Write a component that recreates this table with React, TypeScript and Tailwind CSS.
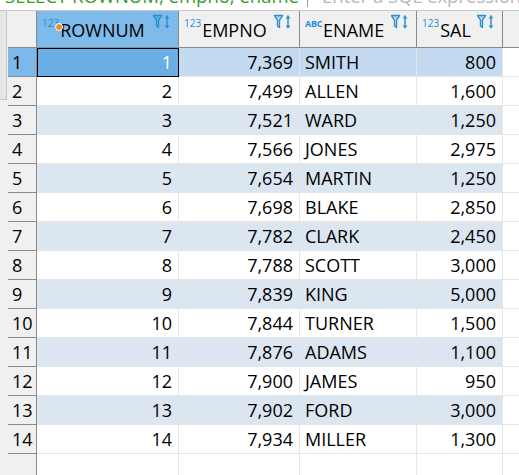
import React from "react";

const ROWS: [number, string, string, string][] = [
  [1, "7,369", "SMITH", "800"],
  [2, "7,499", "ALLEN", "1,600"],
  [3, "7,521", "WARD", "1,250"],
  [4, "7,566", "JONES", "2,975"],
  [5, "7,654", "MARTIN", "1,250"],
  [6, "7,698", "BLAKE", "2,850"],
  [7, "7,782", "CLARK", "2,450"],
  [8, "7,788", "SCOTT", "3,000"],
  [9, "7,839", "KING", "5,000"],
  [10, "7,844", "TURNER", "1,500"],
  [11, "7,876", "ADAMS", "1,100"],
  [12, "7,900", "JAMES", "950"],
  [13, "7,902", "FORD", "3,000"],
  [14, "7,934", "MILLER", "1,300"],
];

const COLS = "grid-cols-[29px_142px_121px_117px_86px_1fr]";

function FilterSort() {
  return (
    <svg width="20" height="16" viewBox="0 0 20 16" className="shrink-0">
      <path d="M1.5 1.5h8l-3 4.5v7.5l-2-1.5v-6z" fill="none" stroke="#2a8fd0" strokeWidth="1.4" strokeLinejoin="round" />
      <path d="M4.5 3h2" stroke="#2a8fd0" strokeWidth="1" />
      <path d="M15 1.5v12.5" stroke="#2a8fd0" strokeWidth="1.5" />
      <path d="M12.5 4.5l2.5-3 2.5 3z" fill="#2a8fd0" />
      <path d="M12.5 11.5l2.5 3 2.5-3z" fill="#2a8fd0" />
    </svg>
  );
}

function HeaderCell({ label, kind, active, dot }: { label: string; kind: string; active?: boolean; dot?: boolean }) {
  return (
    <div
      className={`relative flex items-end justify-between border-r border-b border-[#8a8a8a] pl-[5px] pr-[6px] pb-[8px] ${
        active ? "bg-[#7fbbea]" : "bg-[#f0f0f0]"
      }`}
    >
      <div className="flex items-end">
        <span
          className={`relative mb-[11px] mr-[1px] leading-none text-[#1b8fd8] ${
            kind === "ABC" ? "text-[9px] font-bold tracking-[-0.3px]" : "text-[10px]"
          }`}
        >
          {kind}
          {dot && (
            <span className="absolute right-[-4px] top-[5px] h-[8px] w-[8px] rounded-full border border-white bg-[#ef8a2a]" />
          )}
        </span>
        <span className="text-[18px] leading-none text-black">{label}</span>
      </div>
      <div className="mb-[9px]">
        <FilterSort />
      </div>
    </div>
  );
}

export default function App() {
  return (
    <div className="h-[475px] w-[519px] overflow-hidden bg-white font-['Open_Sans','Noto_Sans',sans-serif] text-black">
      <div className="relative h-[10px] overflow-hidden">
        <div className="absolute left-[5px] top-[-16px] flex items-center whitespace-nowrap text-[18.5px] leading-[24px]">
          <span className="text-[#3a9a2c]">SELECT ROWNUM, empno, ename</span>
          <span className="ml-[8px] mr-[14px] h-[22px] w-px bg-[#9a9a9a]" />
          <span className="text-[#b8b8b8]">Enter a SQL expression to filter results</span>
        </div>
      </div>
      <div className="flex h-[465px]">
        <div className="w-[8px] shrink-0 bg-[#f0f0f0]">
          <div className="h-[90px] w-[7px] border border-l-0 border-[#c4c4c4] bg-[#e6e6e6]" />
        </div>
        <div
          className={`grid flex-1 ${COLS} grid-rows-[37px] auto-rows-[29px] content-start border-t border-[#c8c8c8] text-[18px]`}
        >
          <div className="border-r border-b border-[#8a8a8a] bg-[#f0f0f0]" />
          <HeaderCell label="ROWNUM" kind="123" active dot />
          <HeaderCell label="EMPNO" kind="123" />
          <HeaderCell label="ENAME" kind="ABC" />
          <HeaderCell label="SAL" kind="123" />
          <div className="border-b border-[#8a8a8a] bg-[#f0f0f0]" />

          {ROWS.map(([n, empno, ename, sal]) => {
            const sel = n === 1;
            const stripe = n % 2 === 1 && !sel;
            const bg = sel ? "bg-[#c3daf0]" : stripe ? "bg-[#dce6f1]" : "bg-white";
            return (
              <React.Fragment key={n}>
                <div
                  className={`flex items-center border-r border-b border-[#8a8a8a] pl-[4px] ${
                    sel ? "bg-[#7cb9e8]" : "bg-[#f0f0f0]"
                  }`}
                >
                  {n}
                </div>
                {sel ? (
                  <div className="flex items-center justify-end border border-black bg-[#6aaee3] pr-[6px] text-white">
                    {n}
                  </div>
                ) : (
                  <div className={`flex items-center justify-end border-r border-b border-[#e6e6e6] pr-[6px] ${bg}`}>
                    {n}
                  </div>
                )}
                <div className={`flex items-center justify-end border-r border-b border-[#e6e6e6] pr-[6px] ${bg}`}>
                  {empno}
                </div>
                <div className={`flex items-center border-r border-b border-[#e6e6e6] pl-[5px] ${bg}`}>{ename}</div>
                <div className={`flex items-center justify-end border-r border-b border-[#e6e6e6] pr-[6px] ${bg}`}>
                  {sal}
                </div>
                <div className="border-b border-[#e6e6e6] bg-white" />
              </React.Fragment>
            );
          })}
          <div className="h-[30px] border-r border-[#8a8a8a] bg-[#f0f0f0]" />
          <div className="border-r border-[#e6e6e6]" />
          <div className="border-r border-[#e6e6e6]" />
          <div className="border-r border-[#e6e6e6]" />
          <div className="border-r border-[#e6e6e6]" />
          <div />
        </div>
      </div>
    </div>
  );
}
